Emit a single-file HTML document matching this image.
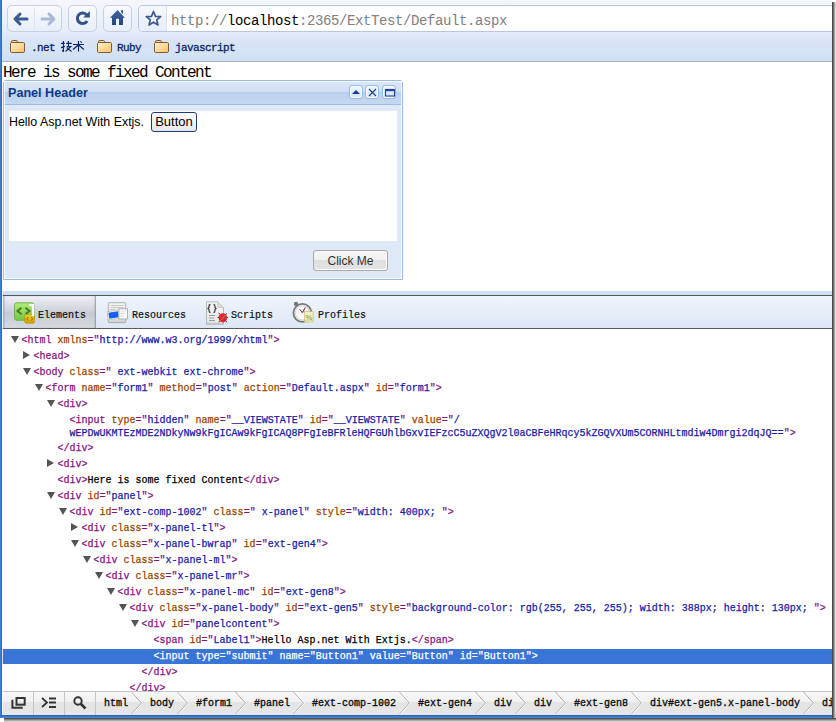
<!DOCTYPE html>
<html><head><meta charset="utf-8">
<style>
*{box-sizing:border-box;margin:0;padding:0}
html,body{width:836px;height:722px;overflow:hidden;background:#fff;position:relative;font-family:"Liberation Sans",sans-serif}
.abs{position:absolute}
svg{position:absolute;overflow:visible}
#lborder{left:0;top:0;width:2px;height:718px;background:linear-gradient(to right,#4684d6,#2f64b0)}
#rshadow{left:832px;top:2px;width:4px;height:720px;background:linear-gradient(to right,#333,#777 40%,#ccc 80%,#eee)}
#bshadow{left:4px;top:718px;width:832px;height:4px;background:linear-gradient(to bottom,#3a3a3a,#7a7a7a 35%,#bbb 70%,#e0e0e0)}
#bborder{left:0;top:715px;width:832px;height:3px;background:linear-gradient(#2a5aa3,#3674c6 45%,#4a8de0)}
/* chrome toolbar */
#toolbar{left:2px;top:0;width:830px;height:32px;background:linear-gradient(#f4f7fc,#e6edf8)}
#bookbar{left:2px;top:32px;width:830px;height:29px;background:linear-gradient(#e2ebf8,#d9e5f6 30%,#d0e0f5)}
#bookline{left:2px;top:61px;width:830px;height:1px;background:#a9b2bf}
.tbtn{top:5px;height:27px;border:1px solid #c5d0e2;border-radius:5px;background:linear-gradient(#f8fafd,#e8eef8)}
#omni{left:138px;top:5px;width:694px;height:27px;border:1px solid #b9c7dd;border-right:none;border-radius:5px 0 0 5px;background:#fff;overflow:hidden}
#star{left:0;top:0;width:28px;height:25px;background:linear-gradient(#f5f8fc,#e7eef8);border-right:1px solid #d6dfec}
#url{left:32px;top:7px;font-family:"Liberation Mono",monospace;font-size:14px;letter-spacing:-0.4px;color:#808080;white-space:pre;line-height:17px}
#url b{color:#000;font-weight:normal}
.bm{top:41px;font-family:"Liberation Mono",monospace;-webkit-text-stroke:0.3px #0a2569;font-size:11px;letter-spacing:-0.6px;color:#0a2569;white-space:pre;line-height:14px}
/* page */
#fixed{left:3px;top:64px;font-family:"Liberation Mono",monospace;font-size:16px;letter-spacing:-1.6px;line-height:18px;color:#000;white-space:pre}
#panel{left:3px;top:80px;width:400px;height:200px;border:1px solid #99bbe8;border-radius:3px 3px 0 0;background:#dfe8f6}
#phead{left:0;top:0;width:398px;height:24px;background:linear-gradient(#dce8f7 0,#cfdff4 48%,#b5cdec 50%,#bcd2ee 56%,#c5d8f1 100%);border-bottom:1px solid #99bbe8;border-radius:2px 2px 0 0}
#ptitle{left:4px;top:5px;font-weight:bold;font-size:12.6px;color:#0f3b86;line-height:15px}
.tool{top:4px;width:14px;height:14px;border:1px solid #94b6e4;border-radius:3px;box-shadow:inset 0 0 0 1px #fff;background:linear-gradient(#eef4fc,#d6e4f7)}
#pbody{left:5px;top:30px;width:388px;height:130px;background:#fff}
#hello{left:0px;top:4px;font-size:12.4px;color:#000;line-height:14px;white-space:pre}
#btn1{left:142px;top:1px;width:46px;height:20px;border:1px solid #1f3d6e;border-radius:3px;background:linear-gradient(#fdfdfd,#e8e8e8);font-size:13px;color:#000;line-height:17px;text-align:center}
#clickme{left:309px;top:169px;width:75px;height:21px;border:1px solid #a8a8a8;border-radius:3px;box-shadow:inset -1px -1px 0 #fff;background:linear-gradient(#f7f7f7 0,#efefef 50%,#dfdfdf 50%,#e3e3e3 100%);font-size:12px;color:#333;line-height:21px;text-align:center}
/* devtools */
#dvsep{left:2px;top:291px;width:830px;height:4px;background:#d0dff3}
#dvline1{left:2px;top:295px;width:830px;height:1px;background:#555}
#tabbar{left:2px;top:296px;width:830px;height:32px;background:linear-gradient(#f0f5fc,#dce7f5)}
#dvline2{left:2px;top:328px;width:830px;height:1px;background:#5a5a5a}
#seltab{left:3px;top:296px;width:93px;height:32px;background:linear-gradient(#eef1f5 0,#dadee4 30%,#c7ccd4 55%,#d5dae1 100%);box-shadow:inset -2px 0 2px -1px #8f959d,inset 2px 0 2px -1px #9aa0a8}
.tab{top:308px;font-family:"Liberation Mono",monospace;-webkit-text-stroke:0.2px #111;font-size:10px;letter-spacing:0px;color:#111;line-height:16px;white-space:pre}
.row{position:absolute;font-family:"Liberation Mono",monospace;-webkit-text-stroke:0.25px currentColor;font-size:10px;letter-spacing:0px;line-height:16px;color:#000;white-space:pre}
.t{color:#881280}.an{color:#994500}.av{color:#1a1aa6}
.w,.w span{color:#fff}
.sel{left:2px;width:830px;height:15px;background:#3875d7}
.tri{position:absolute;width:0;height:0}
.tri.down{border-left:4px solid transparent;border-right:4px solid transparent;border-top:7px solid #555;margin-top:1px}
.tri.right{border-top:4px solid transparent;border-bottom:4px solid transparent;border-left:7px solid #555;margin-left:0}
#status{left:2px;top:691px;width:830px;height:24px;border-top:1px solid #c8c8c8;background:linear-gradient(#f8f8f8 0,#f0f0f0 45%,#e4e4e4 45%,#e6e6e6 100%)}
.sdiv{top:692px;width:1px;height:23px;background:#c6c6c6}
.crumb{top:697px;font-family:"Liberation Mono",monospace;-webkit-text-stroke:0.35px #111;font-size:10px;letter-spacing:0px;color:#111;line-height:14px;white-space:pre}
</style></head><body>
<div class="abs" id="toolbar"></div>
<div class="abs tbtn" style="left:7px;width:55px"></div>
<div class="abs" style="left:34px;top:7px;width:1px;height:23px;background:#dde4ef"></div>
<div class="abs tbtn" style="left:68px;width:29px"></div>
<div class="abs tbtn" style="left:103px;width:29px"></div>
<!-- back arrow -->
<svg style="left:13px;top:11.5px" width="16" height="14" viewBox="0 0 16 14"><path d="M7 2 L2 7 L7 12 M2.5 7 H14" fill="none" stroke="#3c5a8e" stroke-width="3" stroke-linecap="round" stroke-linejoin="round"/></svg>
<svg style="left:40px;top:11.5px" width="16" height="14" viewBox="0 0 16 14"><path d="M9 2 L14 7 L9 12 M13.5 7 H2" fill="none" stroke="#a9bad6" stroke-width="3" stroke-linecap="round" stroke-linejoin="round"/></svg>
<!-- reload -->
<svg style="left:74px;top:10px" width="17" height="17" viewBox="0 0 17 17"><path d="M12.6 5 A5.2 5.2 0 1 0 13.1 10.9" fill="none" stroke="#34528a" stroke-width="3"/><path d="M15.9 1.1 L9.2 7.5 L15.9 7.5 Z" fill="#34528a"/></svg>
<!-- home -->
<svg style="left:106px;top:6px" width="24" height="24" viewBox="0 0 24 24"><defs><linearGradient id="hg" x1="0" y1="0" x2="0" y2="1"><stop offset="0" stop-color="#3f64a0"/><stop offset="1" stop-color="#24457e"/></linearGradient></defs><path d="M11.5 4 L4 11.8 H6 V19 H10 V13.2 Q11.5 11.6 13 13.2 V19 H17 V11.8 H19 Z" fill="url(#hg)"/><path d="M15 4.2 H17 V8 L15.3 6.6 Z" fill="#2a4a82"/></svg>
<div class="abs" id="omni"><div class="abs" id="star"></div>
<svg style="left:6px;top:4px" width="17" height="17" viewBox="0 0 17 17"><path d="M8.5 1.5 L10.5 6.3 L15.7 6.6 L11.7 9.9 L13 15 L8.5 12.2 L4 15 L5.3 9.9 L1.3 6.6 L6.5 6.3 Z" fill="none" stroke="#3c5a8e" stroke-width="1.7" stroke-linejoin="round"/></svg>
<div class="abs" id="url">http://<b>localhost</b>:2365/ExtTest/Default.aspx</div></div>
<div class="abs" id="bookbar"></div>
<div class="abs" id="bookline"></div>
<!-- folders -->
<svg style="left:10px;top:40px" width="16" height="13" viewBox="0 0 16 13"><defs><linearGradient id="fg" x1="0" y1="0" x2="1" y2="1"><stop offset="0" stop-color="#fff4cc"/><stop offset="0.6" stop-color="#fbd592"/><stop offset="1" stop-color="#f6c26c"/></linearGradient></defs><path d="M1.5 3 V1.8 Q1.5 0.5 2.8 0.5 H6.2 Q7.5 0.5 7.5 1.8 V3" fill="#f6dca8" stroke="#86592a" stroke-width="1"/><rect x="0.5" y="2.5" width="14" height="10" rx="1.2" fill="url(#fg)" stroke="#86592a" stroke-width="1"/></svg>
<div class="abs bm" style="left:31px">.net</div>
<svg style="left:58px;top:38px" width="30" height="18" viewBox="0 0 30 18"><path d="M3 5.4 H6.8 M5.4 3 V13.3 L4 12.6 M3 9.6 L6.8 8.4 M8.3 5.4 H13.8 M10.4 3 V8.4 M8.6 8.6 H12.8 L7.5 13.5 M8.7 9.6 L13.5 13.5 M15 6.5 H25.8 M20.5 3 V13.6 M20 7.2 L15 11.5 M21 7.2 L25.8 11.5 M22.4 3.3 L23.8 4.6" fill="none" stroke="#0a2569" stroke-width="1.15"/></svg>
<svg style="left:97px;top:40px" width="16" height="13" viewBox="0 0 16 13"><path d="M1.5 3 V1.8 Q1.5 0.5 2.8 0.5 H6.2 Q7.5 0.5 7.5 1.8 V3" fill="#f6dca8" stroke="#86592a" stroke-width="1"/><rect x="0.5" y="2.5" width="14" height="10" rx="1.2" fill="url(#fg)" stroke="#86592a" stroke-width="1"/></svg>
<div class="abs bm" style="left:117px">Ruby</div>
<svg style="left:154px;top:40px" width="16" height="13" viewBox="0 0 16 13"><path d="M1.5 3 V1.8 Q1.5 0.5 2.8 0.5 H6.2 Q7.5 0.5 7.5 1.8 V3" fill="#f6dca8" stroke="#86592a" stroke-width="1"/><rect x="0.5" y="2.5" width="14" height="10" rx="1.2" fill="url(#fg)" stroke="#86592a" stroke-width="1"/></svg>
<div class="abs bm" style="left:175px">javascript</div>

<!-- page -->
<div class="abs" id="fixed">Here is some fixed Content</div>
<div class="abs" id="panel">
 <div class="abs" id="phead">
  <div class="abs" id="ptitle">Panel Header</div>
  <div class="abs tool" style="left:345px"></div>
  <div class="abs tool" style="left:361px"></div>
  <div class="abs tool" style="left:378px"></div>
  <svg style="left:348px;top:8px" width="8" height="6" viewBox="0 0 8 6"><path d="M0 5 L4 1 L8 5 Z" fill="#15428b"/></svg>
  <svg style="left:364px;top:7px" width="9" height="9" viewBox="0 0 9 9"><path d="M1 1 L8 8 M8 1 L1 8" stroke="#1d3f8f" stroke-width="1.1"/></svg>
  <svg style="left:381px;top:8px" width="10" height="8" viewBox="0 0 10 8"><rect x="0.5" y="0.5" width="9" height="6.5" fill="none" stroke="#1f43a0" stroke-width="1.1"/><rect x="0" y="0" width="10" height="2.2" fill="#1f43a0"/></svg>
 </div>
 <div class="abs" style="left:0;top:0;width:1px;height:198px;background:rgba(255,255,255,.75)"></div>
 <div class="abs" style="left:0;top:0;width:398px;height:1px;background:rgba(255,255,255,.75)"></div>
 <div class="abs" style="left:397px;top:0;width:1px;height:198px;background:rgba(255,255,255,.85)"></div>
 <div class="abs" style="left:0;top:197px;width:398px;height:1px;background:rgba(255,255,255,.85)"></div>
 <div class="abs" id="pbody">
  <div class="abs" id="hello">Hello Asp.net With Extjs.</div>
  <div class="abs" id="btn1">Button</div>
 </div>
 <div class="abs" id="clickme">Click Me</div>
</div>

<!-- devtools -->
<div class="abs" id="dvsep"></div>
<div class="abs" id="dvline1"></div>
<div class="abs" id="tabbar"></div>
<div class="abs" id="seltab"></div>
<div class="abs" id="dvline2"></div>
<!-- tab icons -->
<svg style="left:14px;top:302px" width="22" height="22" viewBox="0 0 22 22"><defs><linearGradient id="gg" x1="0" y1="0" x2="0" y2="1"><stop offset="0" stop-color="#b2ec78"/><stop offset="1" stop-color="#76c640"/></linearGradient><linearGradient id="yg" x1="0" y1="0" x2="0" y2="1"><stop offset="0" stop-color="#f2d02a"/><stop offset="1" stop-color="#d49c00"/></linearGradient></defs><rect x="0.5" y="0.8" width="19.5" height="17.5" rx="2.5" fill="url(#gg)" stroke="#62a83a" stroke-width="0.8"/><path d="M7.5 5.8 L3.5 9 L7.5 12.2 M11.5 5.8 L15.5 9 L11.5 12.2" fill="none" stroke="#4a7a2c" stroke-width="2"/><rect x="10.8" y="12.6" width="9.6" height="8.6" rx="1.2" fill="url(#yg)" stroke="#b08a00" stroke-width="0.6"/><path d="M14.2 15 L12.8 16.8 L14.2 18.6 M17.2 15 L18.6 16.8 L17.2 18.6" fill="none" stroke="#8a6a00" stroke-width="1"/><path d="M15.2 3 H19 V14" fill="none" stroke="#fff" stroke-width="2.2"/></svg>
<div class="abs tab" style="left:38px">Elements</div>
<svg style="left:106px;top:302px" width="23" height="22" viewBox="0 0 23 22"><defs><linearGradient id="dg" x1="0" y1="0" x2="0" y2="1"><stop offset="0" stop-color="#f4f4f4"/><stop offset="0.8" stop-color="#e6e6e6"/><stop offset="1" stop-color="#c8c8c8"/></linearGradient></defs><rect x="2.3" y="0.7" width="17.4" height="20" rx="0.8" fill="url(#dg)" stroke="#a8a8a8" stroke-width="0.9"/><path d="M4.5 3.5 H17.5 M4.5 5.5 H17.5 M4.5 7.5 H9" stroke="#c9c9c9" stroke-width="1.2"/><path d="M1 9.8 L12.6 7.8 L13.8 16 L2.2 18 Z" fill="#fffbe8" stroke="#b0a890" stroke-width="0.6"/><path d="M2.3 10.8 L11.8 9.2 L12.8 15.2 L3.3 16.8 Z" fill="#1560f0"/><rect x="12.9" y="6.8" width="8.5" height="10.2" fill="#fbfbfb" stroke="#a0a0a0" stroke-width="0.8"/><path d="M14.5 9 H19.5 M14.5 11.5 H19 M14.5 14 H18" stroke="#d8d8d8" stroke-width="0.9"/></svg>
<div class="abs tab" style="left:132px">Resources</div>
<svg style="left:205px;top:300px" width="24" height="25" viewBox="0 0 24 25"><defs><linearGradient id="sg" x1="0" y1="0" x2="0" y2="1"><stop offset="0" stop-color="#f3f3f3"/><stop offset="0.85" stop-color="#ebebeb"/><stop offset="1" stop-color="#cfcfcf"/></linearGradient></defs><path d="M1.5 1.8 H12.8 L18.5 7.5 V24.2 H1.5 Z" fill="url(#sg)" stroke="#b0b0b0" stroke-width="0.9"/><path d="M12.8 1.8 V7.5 H18.5" fill="#dcdcdc" stroke="#b8b8b8" stroke-width="0.6"/><path d="M5.5 4.5 Q4 4.5 4 6.5 V7.5 L3 8.5 L4 9.5 V10.5 Q4 12.5 5.5 12.5 M8.5 4.5 Q10 4.5 10 6.5 V7.5 L11 8.5 L10 9.5 V10.5 Q10 12.5 8.5 12.5" fill="none" stroke="#444" stroke-width="1.3"/><path d="M4 15.5 H10 M4 18 H9 M4 20.5 H10" stroke="#9a9a9a" stroke-width="1"/><path d="M13.5 13 L15.5 14.5 M22 13.5 L20 15 M12.5 17.5 H14.5 M23 17.5 H21 M13.5 22 L15.5 20.5 M22 22 L20 20.5" stroke="#333" stroke-width="0.9"/><ellipse cx="17.8" cy="17.8" rx="4.3" ry="4.6" fill="#d9262c"/><path d="M15.5 20.5 L20.5 15" stroke="#f08080" stroke-width="0.8"/></svg>
<div class="abs tab" style="left:231px">Scripts</div>
<svg style="left:291px;top:300px" width="26" height="26" viewBox="0 0 26 26"><circle cx="11.4" cy="12.9" r="9" fill="#f2f2f4" stroke="#7a7a7a" stroke-width="1.8"/><circle cx="11.4" cy="12.9" r="7.1" fill="#fafafc" stroke="#c0c0c0" stroke-width="0.6"/><circle cx="5" cy="3.9" r="2.2" fill="#777"/><path d="M11.4 12.9 L8.5 9 M11.4 12.9 L14.2 7.6" stroke="#333" stroke-width="0.9"/><path d="M11.4 12.9 L14.2 7.6" stroke="#e04040" stroke-width="1"/><rect x="13.6" y="11.6" width="8.6" height="10.4" fill="#f3eec0" stroke="#c8bd78" stroke-width="0.7"/><text x="14.2" y="19.5" font-family="Liberation Sans" font-weight="bold" font-size="8" fill="#8fae6a">%</text><path d="M14 20.5 H22" stroke="#d9d2a0" stroke-width="0.8"/></svg>
<div class="abs tab" style="left:318px">Profiles</div>

<div class="tri down" style="left:11px;top:335px"></div>
<div class="row" style="left:21.5px;top:333.34px"><span class="t">&lt;html</span> <span class="an">xmlns</span><span class="t">="</span><span class="av">http://www.w3.org/1999/xhtml</span><span class="t">"</span><span class="t">&gt;</span></div>
<div class="tri right" style="left:23px;top:351px"></div>
<div class="row" style="left:33.5px;top:349.34px"><span class="t">&lt;head</span><span class="t">&gt;</span></div>
<div class="tri down" style="left:23px;top:367px"></div>
<div class="row" style="left:33.5px;top:365.34px"><span class="t">&lt;body</span> <span class="an">class</span><span class="t">="</span><span class="av"> ext-webkit ext-chrome</span><span class="t">"</span><span class="t">&gt;</span></div>
<div class="tri down" style="left:35px;top:383px"></div>
<div class="row" style="left:45.5px;top:381.34px"><span class="t">&lt;form</span> <span class="an">name</span><span class="t">="</span><span class="av">form1</span><span class="t">"</span> <span class="an">method</span><span class="t">="</span><span class="av">post</span><span class="t">"</span> <span class="an">action</span><span class="t">="</span><span class="av">Default.aspx</span><span class="t">"</span> <span class="an">id</span><span class="t">="</span><span class="av">form1</span><span class="t">"</span><span class="t">&gt;</span></div>
<div class="tri down" style="left:47px;top:399px"></div>
<div class="row" style="left:57.5px;top:397.34px"><span class="t">&lt;div</span><span class="t">&gt;</span></div>
<div class="row" style="left:69.5px;top:413.34px"><span class="t">&lt;input</span> <span class="an">type</span><span class="t">="</span><span class="av">hidden</span><span class="t">"</span> <span class="an">name</span><span class="t">="</span><span class="av">__VIEWSTATE</span><span class="t">"</span> <span class="an">id</span><span class="t">="</span><span class="av">__VIEWSTATE</span><span class="t">"</span> <span class="an">value</span><span class="t">="</span><span class="av">/</span></div>
<div class="row" style="left:69.5px;top:426.34px"><span class="av">wEPDwUKMTEzMDE2NDkyNw9kFgICAw9kFgICAQ8PFgIeBFRleHQFGUhlbGxvIEFzcC5uZXQgV2l0aCBFeHRqcy5kZGQVXUm5CORNHLtmdiw4Dmrgi2dqJQ==</span><span class="t">"&gt;</span></div>
<div class="row" style="left:57.5px;top:441.34px"><span class="t">&lt;/div</span><span class="t">&gt;</span></div>
<div class="tri right" style="left:47px;top:459px"></div>
<div class="row" style="left:57.5px;top:457.34px"><span class="t">&lt;div</span><span class="t">&gt;</span></div>
<div class="row" style="left:57.5px;top:473.34px"><span class="t">&lt;div</span><span class="t">&gt;</span>Here is some fixed Content<span class="t">&lt;/div</span><span class="t">&gt;</span></div>
<div class="tri down" style="left:47px;top:491px"></div>
<div class="row" style="left:57.5px;top:489.34px"><span class="t">&lt;div</span> <span class="an">id</span><span class="t">="</span><span class="av">panel</span><span class="t">"</span><span class="t">&gt;</span></div>
<div class="tri down" style="left:59px;top:507px"></div>
<div class="row" style="left:69.5px;top:505.34px"><span class="t">&lt;div</span> <span class="an">id</span><span class="t">="</span><span class="av">ext-comp-1002</span><span class="t">"</span> <span class="an">class</span><span class="t">="</span><span class="av"> x-panel</span><span class="t">"</span> <span class="an">style</span><span class="t">="</span><span class="av">width: 400px; </span><span class="t">"</span><span class="t">&gt;</span></div>
<div class="tri right" style="left:71px;top:523px"></div>
<div class="row" style="left:81.5px;top:521.34px"><span class="t">&lt;div</span> <span class="an">class</span><span class="t">="</span><span class="av">x-panel-tl</span><span class="t">"</span><span class="t">&gt;</span></div>
<div class="tri down" style="left:71px;top:539px"></div>
<div class="row" style="left:81.5px;top:537.34px"><span class="t">&lt;div</span> <span class="an">class</span><span class="t">="</span><span class="av">x-panel-bwrap</span><span class="t">"</span> <span class="an">id</span><span class="t">="</span><span class="av">ext-gen4</span><span class="t">"</span><span class="t">&gt;</span></div>
<div class="tri down" style="left:83px;top:555px"></div>
<div class="row" style="left:93.5px;top:553.34px"><span class="t">&lt;div</span> <span class="an">class</span><span class="t">="</span><span class="av">x-panel-ml</span><span class="t">"</span><span class="t">&gt;</span></div>
<div class="tri down" style="left:95px;top:571px"></div>
<div class="row" style="left:105.5px;top:569.34px"><span class="t">&lt;div</span> <span class="an">class</span><span class="t">="</span><span class="av">x-panel-mr</span><span class="t">"</span><span class="t">&gt;</span></div>
<div class="tri down" style="left:107px;top:587px"></div>
<div class="row" style="left:117.5px;top:585.34px"><span class="t">&lt;div</span> <span class="an">class</span><span class="t">="</span><span class="av">x-panel-mc</span><span class="t">"</span> <span class="an">id</span><span class="t">="</span><span class="av">ext-gen8</span><span class="t">"</span><span class="t">&gt;</span></div>
<div class="tri down" style="left:119px;top:603px"></div>
<div class="row" style="left:129.5px;top:601.34px"><span class="t">&lt;div</span> <span class="an">class</span><span class="t">="</span><span class="av">x-panel-body</span><span class="t">"</span> <span class="an">id</span><span class="t">="</span><span class="av">ext-gen5</span><span class="t">"</span> <span class="an">style</span><span class="t">="</span><span class="av">background-color: rgb(255, 255, 255); width: 388px; height: 130px; </span><span class="t">"</span><span class="t">&gt;</span></div>
<div class="tri down" style="left:131px;top:619px"></div>
<div class="row" style="left:141.5px;top:617.34px"><span class="t">&lt;div</span> <span class="an">id</span><span class="t">="</span><span class="av">panelcontent</span><span class="t">"</span><span class="t">&gt;</span></div>
<div class="row" style="left:153.5px;top:633.34px"><span class="t">&lt;span</span> <span class="an">id</span><span class="t">="</span><span class="av">Label1</span><span class="t">"</span><span class="t">&gt;</span>Hello Asp.net With Extjs.<span class="t">&lt;/span</span><span class="t">&gt;</span></div>
<div class="abs sel" style="top:649px"></div>
<div class="row w" style="left:153.5px;top:649.34px"><span class="t">&lt;input</span> <span class="an">type</span><span class="t">="</span><span class="av">submit</span><span class="t">"</span> <span class="an">name</span><span class="t">="</span><span class="av">Button1</span><span class="t">"</span> <span class="an">value</span><span class="t">="</span><span class="av">Button</span><span class="t">"</span> <span class="an">id</span><span class="t">="</span><span class="av">Button1</span><span class="t">"</span><span class="t">&gt;</span></div>
<div class="row" style="left:141.5px;top:665.34px"><span class="t">&lt;/div</span><span class="t">&gt;</span></div>
<div class="row" style="left:129.5px;top:681.34px"><span class="t">&lt;/div</span><span class="t">&gt;</span></div>

<!-- status bar -->
<div class="abs" id="status"></div>
<div class="abs sdiv" style="left:33px"></div>
<div class="abs sdiv" style="left:64px"></div>
<div class="abs sdiv" style="left:95px"></div>
<svg style="left:10px;top:696px" width="17" height="14" viewBox="0 0 17 14"><path d="M2.4 3.8 V11.7 H12.7" fill="none" stroke="#333" stroke-width="2"/><rect x="6.5" y="2" width="8.2" height="6.7" fill="none" stroke="#333" stroke-width="2"/></svg>
<svg style="left:41px;top:697px" width="16" height="12" viewBox="0 0 16 12"><path d="M1 1 L6 5.5 L1 10" fill="none" stroke="#333" stroke-width="1.8"/><path d="M8 1.5 H15 M8 5.5 H15 M8 10 H15" stroke="#333" stroke-width="1.8"/></svg>
<svg style="left:73px;top:696px" width="15" height="15" viewBox="0 0 15 15"><circle cx="5" cy="5" r="3.7" fill="none" stroke="#333" stroke-width="1.9"/><path d="M7.5 7.5 L12.5 12.5" stroke="#333" stroke-width="2.6"/></svg>
<div class="abs crumb" style="left:104px">html</div>
<svg style="left:131px;top:692px" width="12" height="22" viewBox="0 0 12 22"><path d="M1.5 0 L11.5 11 L1.5 22" fill="none" stroke="#fff" stroke-width="1"/><path d="M0.5 0 L10.5 11 L0.5 22" fill="none" stroke="#b4b4b4" stroke-width="1"/></svg>
<div class="abs crumb" style="left:150px">body</div>
<svg style="left:177px;top:692px" width="12" height="22" viewBox="0 0 12 22"><path d="M1.5 0 L11.5 11 L1.5 22" fill="none" stroke="#fff" stroke-width="1"/><path d="M0.5 0 L10.5 11 L0.5 22" fill="none" stroke="#b4b4b4" stroke-width="1"/></svg>
<div class="abs crumb" style="left:196px">#form1</div>
<svg style="left:235px;top:692px" width="12" height="22" viewBox="0 0 12 22"><path d="M1.5 0 L11.5 11 L1.5 22" fill="none" stroke="#fff" stroke-width="1"/><path d="M0.5 0 L10.5 11 L0.5 22" fill="none" stroke="#b4b4b4" stroke-width="1"/></svg>
<div class="abs crumb" style="left:254px">#panel</div>
<svg style="left:293px;top:692px" width="12" height="22" viewBox="0 0 12 22"><path d="M1.5 0 L11.5 11 L1.5 22" fill="none" stroke="#fff" stroke-width="1"/><path d="M0.5 0 L10.5 11 L0.5 22" fill="none" stroke="#b4b4b4" stroke-width="1"/></svg>
<div class="abs crumb" style="left:312px">#ext-comp-1002</div>
<svg style="left:399px;top:692px" width="12" height="22" viewBox="0 0 12 22"><path d="M1.5 0 L11.5 11 L1.5 22" fill="none" stroke="#fff" stroke-width="1"/><path d="M0.5 0 L10.5 11 L0.5 22" fill="none" stroke="#b4b4b4" stroke-width="1"/></svg>
<div class="abs crumb" style="left:418px">#ext-gen4</div>
<svg style="left:475px;top:692px" width="12" height="22" viewBox="0 0 12 22"><path d="M1.5 0 L11.5 11 L1.5 22" fill="none" stroke="#fff" stroke-width="1"/><path d="M0.5 0 L10.5 11 L0.5 22" fill="none" stroke="#b4b4b4" stroke-width="1"/></svg>
<div class="abs crumb" style="left:494px">div</div>
<svg style="left:515px;top:692px" width="12" height="22" viewBox="0 0 12 22"><path d="M1.5 0 L11.5 11 L1.5 22" fill="none" stroke="#fff" stroke-width="1"/><path d="M0.5 0 L10.5 11 L0.5 22" fill="none" stroke="#b4b4b4" stroke-width="1"/></svg>
<div class="abs crumb" style="left:534px">div</div>
<svg style="left:555px;top:692px" width="12" height="22" viewBox="0 0 12 22"><path d="M1.5 0 L11.5 11 L1.5 22" fill="none" stroke="#fff" stroke-width="1"/><path d="M0.5 0 L10.5 11 L0.5 22" fill="none" stroke="#b4b4b4" stroke-width="1"/></svg>
<div class="abs crumb" style="left:574px">#ext-gen8</div>
<svg style="left:631px;top:692px" width="12" height="22" viewBox="0 0 12 22"><path d="M1.5 0 L11.5 11 L1.5 22" fill="none" stroke="#fff" stroke-width="1"/><path d="M0.5 0 L10.5 11 L0.5 22" fill="none" stroke="#b4b4b4" stroke-width="1"/></svg>
<div class="abs crumb" style="left:650px">div#ext-gen5.x-panel-body</div>
<svg style="left:803px;top:692px" width="12" height="22" viewBox="0 0 12 22"><path d="M1.5 0 L11.5 11 L1.5 22" fill="none" stroke="#fff" stroke-width="1"/><path d="M0.5 0 L10.5 11 L0.5 22" fill="none" stroke="#b4b4b4" stroke-width="1"/></svg>
<div class="abs crumb" style="left:822px">di</div>

<div class="abs" style="left:2px;top:62px;width:1px;height:653px;background:rgba(255,255,255,.8)"></div>
<div class="abs" id="lborder"></div>
<div class="abs" id="bborder"></div>
<div class="abs" id="rshadow"></div>
<div class="abs" id="bshadow"></div>
</body></html>
